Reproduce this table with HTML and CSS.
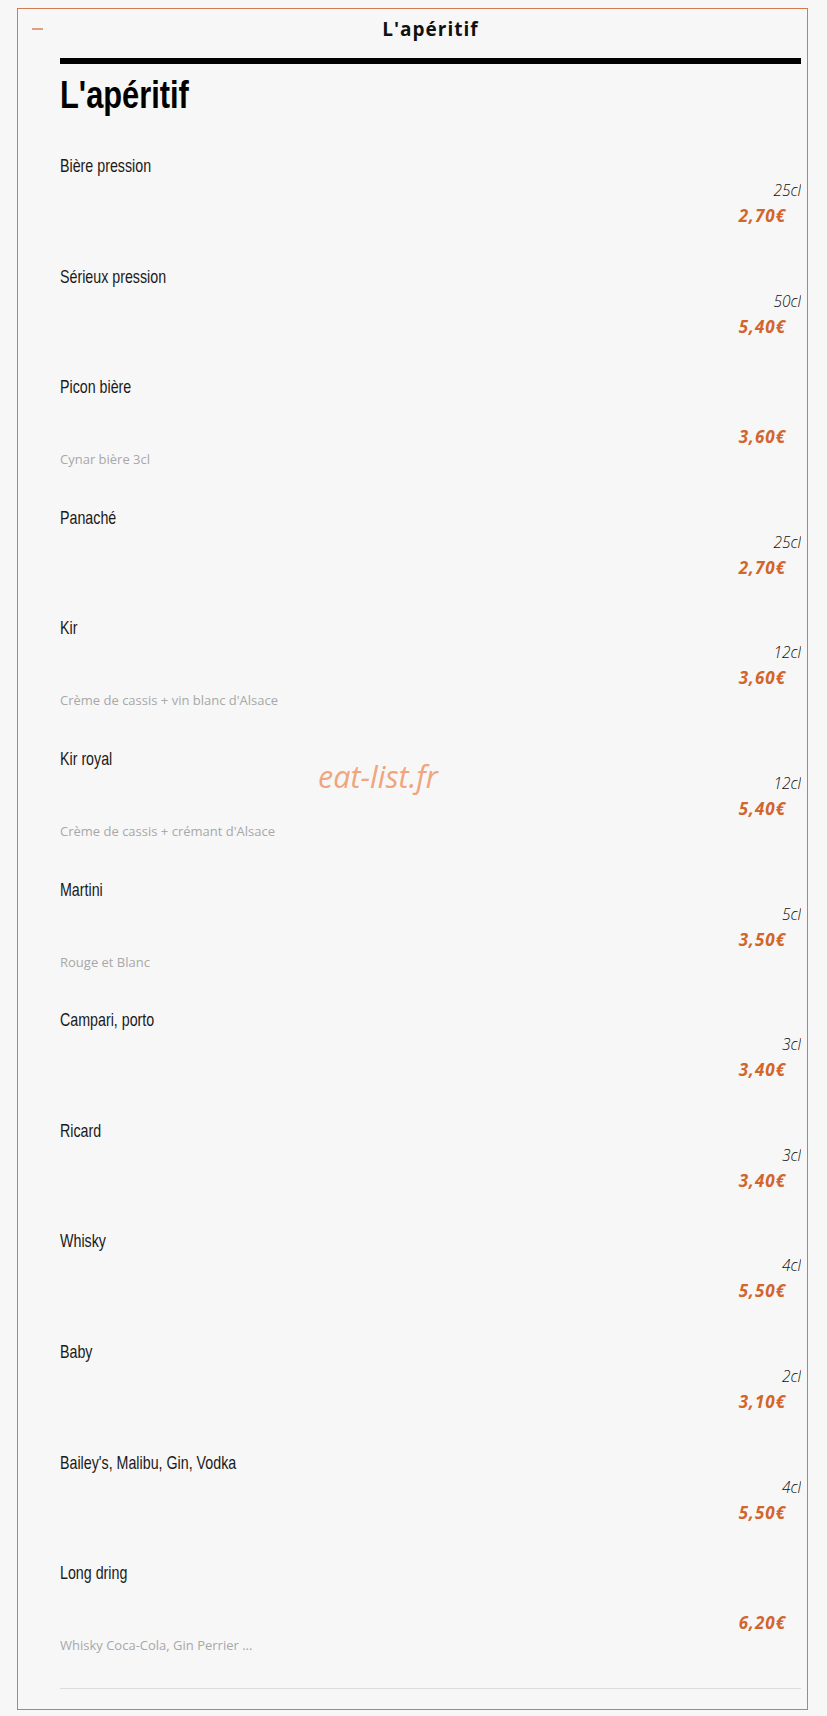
FILE: index.html
```html
<!DOCTYPE html>
<html lang="fr">

<head>
  <meta charset="UTF-8">
  <meta name="viewport" content="width=device-width, initial-scale=1.0">
  <title>L'apéritif</title>
  <link rel="stylesheet" href="styles.css">
</head>

<body>

  <section class="menu">
    <div class="menu__head">
      <button class="menu__toggle" type="button" aria-expanded="true" aria-controls="aperitif"></button>
      <h2 class="menu__title">L'apéritif</h2>
    </div>

    <div class="menu__body" id="aperitif">
      <div class="menu__bar"></div>
      <h1 class="menu__heading"><span>L'apéritif</span></h1>

      <ul class="menu__list">
        <li class="dish">
          <p class="dish__name"><span>Bière pression</span></p>
          <p class="dish__volume"><span>25cl</span></p>
          <p class="dish__price">2,70€</p>
        </li>
        <li class="dish">
          <p class="dish__name"><span>Sérieux pression</span></p>
          <p class="dish__volume"><span>50cl</span></p>
          <p class="dish__price">5,40€</p>
        </li>
        <li class="dish">
          <p class="dish__name"><span>Picon bière</span></p>
          <p class="dish__volume"></p>
          <p class="dish__price">3,60€</p>
          <p class="dish__desc">Cynar bière 3cl</p>
        </li>
        <li class="dish">
          <p class="dish__name"><span>Panaché</span></p>
          <p class="dish__volume"><span>25cl</span></p>
          <p class="dish__price">2,70€</p>
        </li>
        <li class="dish">
          <p class="dish__name"><span>Kir</span></p>
          <p class="dish__volume"><span>12cl</span></p>
          <p class="dish__price">3,60€</p>
          <p class="dish__desc">Crème de cassis + vin blanc d'Alsace</p>
        </li>
        <li class="dish">
          <p class="dish__name"><span>Kir royal</span></p>
          <p class="dish__volume"><span>12cl</span></p>
          <p class="dish__price">5,40€</p>
          <p class="dish__desc">Crème de cassis + crémant d'Alsace</p>
        </li>
        <li class="dish">
          <p class="dish__name"><span>Martini</span></p>
          <p class="dish__volume"><span>5cl</span></p>
          <p class="dish__price">3,50€</p>
          <p class="dish__desc">Rouge et Blanc</p>
        </li>
        <li class="dish">
          <p class="dish__name"><span>Campari, porto</span></p>
          <p class="dish__volume"><span>3cl</span></p>
          <p class="dish__price">3,40€</p>
        </li>
        <li class="dish">
          <p class="dish__name"><span>Ricard</span></p>
          <p class="dish__volume"><span>3cl</span></p>
          <p class="dish__price">3,40€</p>
        </li>
        <li class="dish">
          <p class="dish__name"><span>Whisky</span></p>
          <p class="dish__volume"><span>4cl</span></p>
          <p class="dish__price">5,50€</p>
        </li>
        <li class="dish">
          <p class="dish__name"><span>Baby</span></p>
          <p class="dish__volume"><span>2cl</span></p>
          <p class="dish__price">3,10€</p>
        </li>
        <li class="dish">
          <p class="dish__name"><span>Bailey's, Malibu, Gin, Vodka</span></p>
          <p class="dish__volume"><span>4cl</span></p>
          <p class="dish__price">5,50€</p>
        </li>
        <li class="dish">
          <p class="dish__name"><span>Long dring</span></p>
          <p class="dish__volume"></p>
          <p class="dish__price">6,20€</p>
          <p class="dish__desc">Whisky Coca-Cola, Gin Perrier ...</p>
        </li>
      </ul>

      <hr class="menu__rule">
    </div>

    <span class="menu__watermark">eat-list.fr</span>
  </section>

</body>

</html>
```

FILE: styles.css
```css
*,
*:after,
*:before {
  margin: 0;
  padding: 0;
  box-sizing: border-box;
}

body {
  background: #f7f7f7;
  font-family: "Open Sans", sans-serif;
  color: #1a1a1a;
  padding: 8px 19px 8px 17px;
}

.menu {
  position: relative;
  border: 1px solid #cf7d4f;
  padding: 0 6px 20px 0;
}

.menu__head {
  display: flex;
  align-items: center;
  padding-top: 6px;
}

.menu__toggle {
  flex: none;
  width: 11px;
  height: 2px;
  margin-left: 14px;
  border: 0;
  background: #e0a080;
}

.menu__title {
  flex: 1;
  margin-left: 17px;
  text-align: center;
  font-size: 19px;
  line-height: 28px;
  font-weight: 700;
  letter-spacing: 1px;
  color: #111;
}

.menu__body {
  padding-left: 42px;
}

.menu__bar {
  height: 6px;
  margin-top: 15px;
  background: #000;
}

.menu__heading {
  margin-top: 9px;
  font-family: "Liberation Sans", Arial, sans-serif;
  font-size: 39px;
  line-height: 44px;
  font-weight: 700;
  color: #000;
  white-space: nowrap;
}

.menu__heading span {
  display: inline-block;
  transform: scaleX(0.79);
  transform-origin: left center;
}

.menu__list {
  list-style: none;
  margin-top: 36px;
}

.dish {
  padding-bottom: 35.6px;
}

.dish__name {
  font-family: "Liberation Sans", Arial, sans-serif;
  font-size: 19px;
  line-height: 25px;
  color: #1a1a1a;
  white-space: nowrap;
}

.dish__name span {
  display: inline-block;
  transform: scaleX(0.75);
  transform-origin: left center;
}

.dish__volume {
  height: 25px;
  overflow: hidden;
  text-align: right;
  font-size: 15.5px;
  line-height: 25px;
  font-style: italic;
  font-weight: 300;
  color: #111;
}

.dish__price {
  padding-right: 15px;
  text-align: right;
  font-size: 17px;
  line-height: 25px;
  font-style: italic;
  font-weight: 700;
  letter-spacing: 1px;
  color: #d2652b;
}

.dish__desc {
  font-size: 13px;
  line-height: 20px;
  color: #a8a8a8;
}

.menu__rule {
  border: 0;
  border-top: 1px solid #dcdcdc;
  margin-top: -3px;
}

.menu__watermark {
  position: absolute;
  left: 300px;
  top: 746px;
  font-size: 30.5px;
  font-style: italic;
  color: #f0a57c;
  pointer-events: none;
}
```
